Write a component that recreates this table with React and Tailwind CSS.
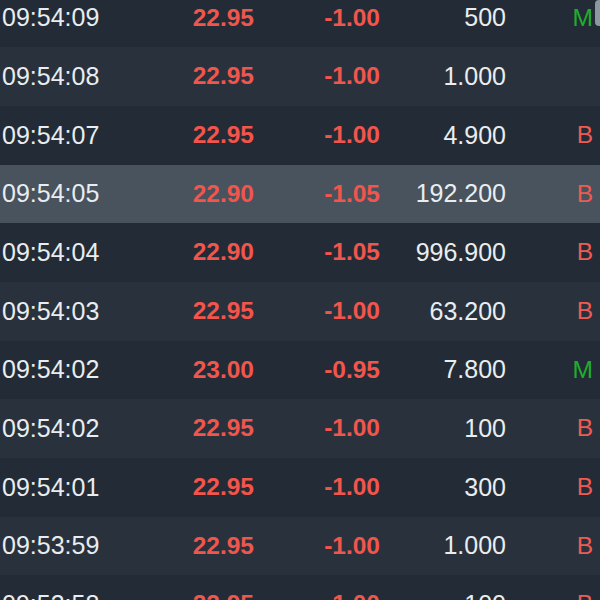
const trades = [
  { time: '09:54:09', price: '22.95', change: '-1.00', volume: '500', side: 'M' },
  { time: '09:54:08', price: '22.95', change: '-1.00', volume: '1.000', side: '' },
  { time: '09:54:07', price: '22.95', change: '-1.00', volume: '4.900', side: 'B' },
  { time: '09:54:05', price: '22.90', change: '-1.05', volume: '192.200', side: 'B', active: true },
  { time: '09:54:04', price: '22.90', change: '-1.05', volume: '996.900', side: 'B' },
  { time: '09:54:03', price: '22.95', change: '-1.00', volume: '63.200', side: 'B' },
  { time: '09:54:02', price: '23.00', change: '-0.95', volume: '7.800', side: 'M' },
  { time: '09:54:02', price: '22.95', change: '-1.00', volume: '100', side: 'B' },
  { time: '09:54:01', price: '22.95', change: '-1.00', volume: '300', side: 'B' },
  { time: '09:53:59', price: '22.95', change: '-1.00', volume: '1.000', side: 'B' },
  { time: '09:53:58', price: '22.95', change: '-1.00', volume: '100', side: 'B' },
];

export default function App() {
  return (
    <div className="relative w-[600px] h-[600px] overflow-hidden bg-[#232c36] font-['Liberation_Sans',Arial,sans-serif] text-[24.5px]">
      <div className="-mt-[11.3px]">
        {trades.map((t, i) => (
          <div
            key={i}
            className={`flex items-center h-[58.67px] ${t.active ? 'bg-[#48535d]' : i % 2 === 1 ? 'bg-[#29323c]' : 'bg-[#232c36]'}`}
          >
            <div className="w-[120px] pl-[2px] text-[#e9edf0] text-[25px]">{t.time}</div>
            <div className="w-[134px] text-right font-bold text-[#f2554b]">{t.price}</div>
            <div className="w-[126px] text-right font-bold text-[#f2554b]">{t.change}</div>
            <div className="w-[126px] text-right text-[#e9edf0] text-[25px]">{t.volume}</div>
            <div className={`w-[88px] pr-[1px] text-right ${t.side === 'M' ? 'text-[#1fae2c]' : 'text-[#ef5b52]'}`}>{t.side}</div>
          </div>
        ))}
      </div>
      <div className="absolute right-0 top-0 w-[5px] h-[26px] rounded-l-sm bg-[#8d979f]"></div>
    </div>
  );
}
